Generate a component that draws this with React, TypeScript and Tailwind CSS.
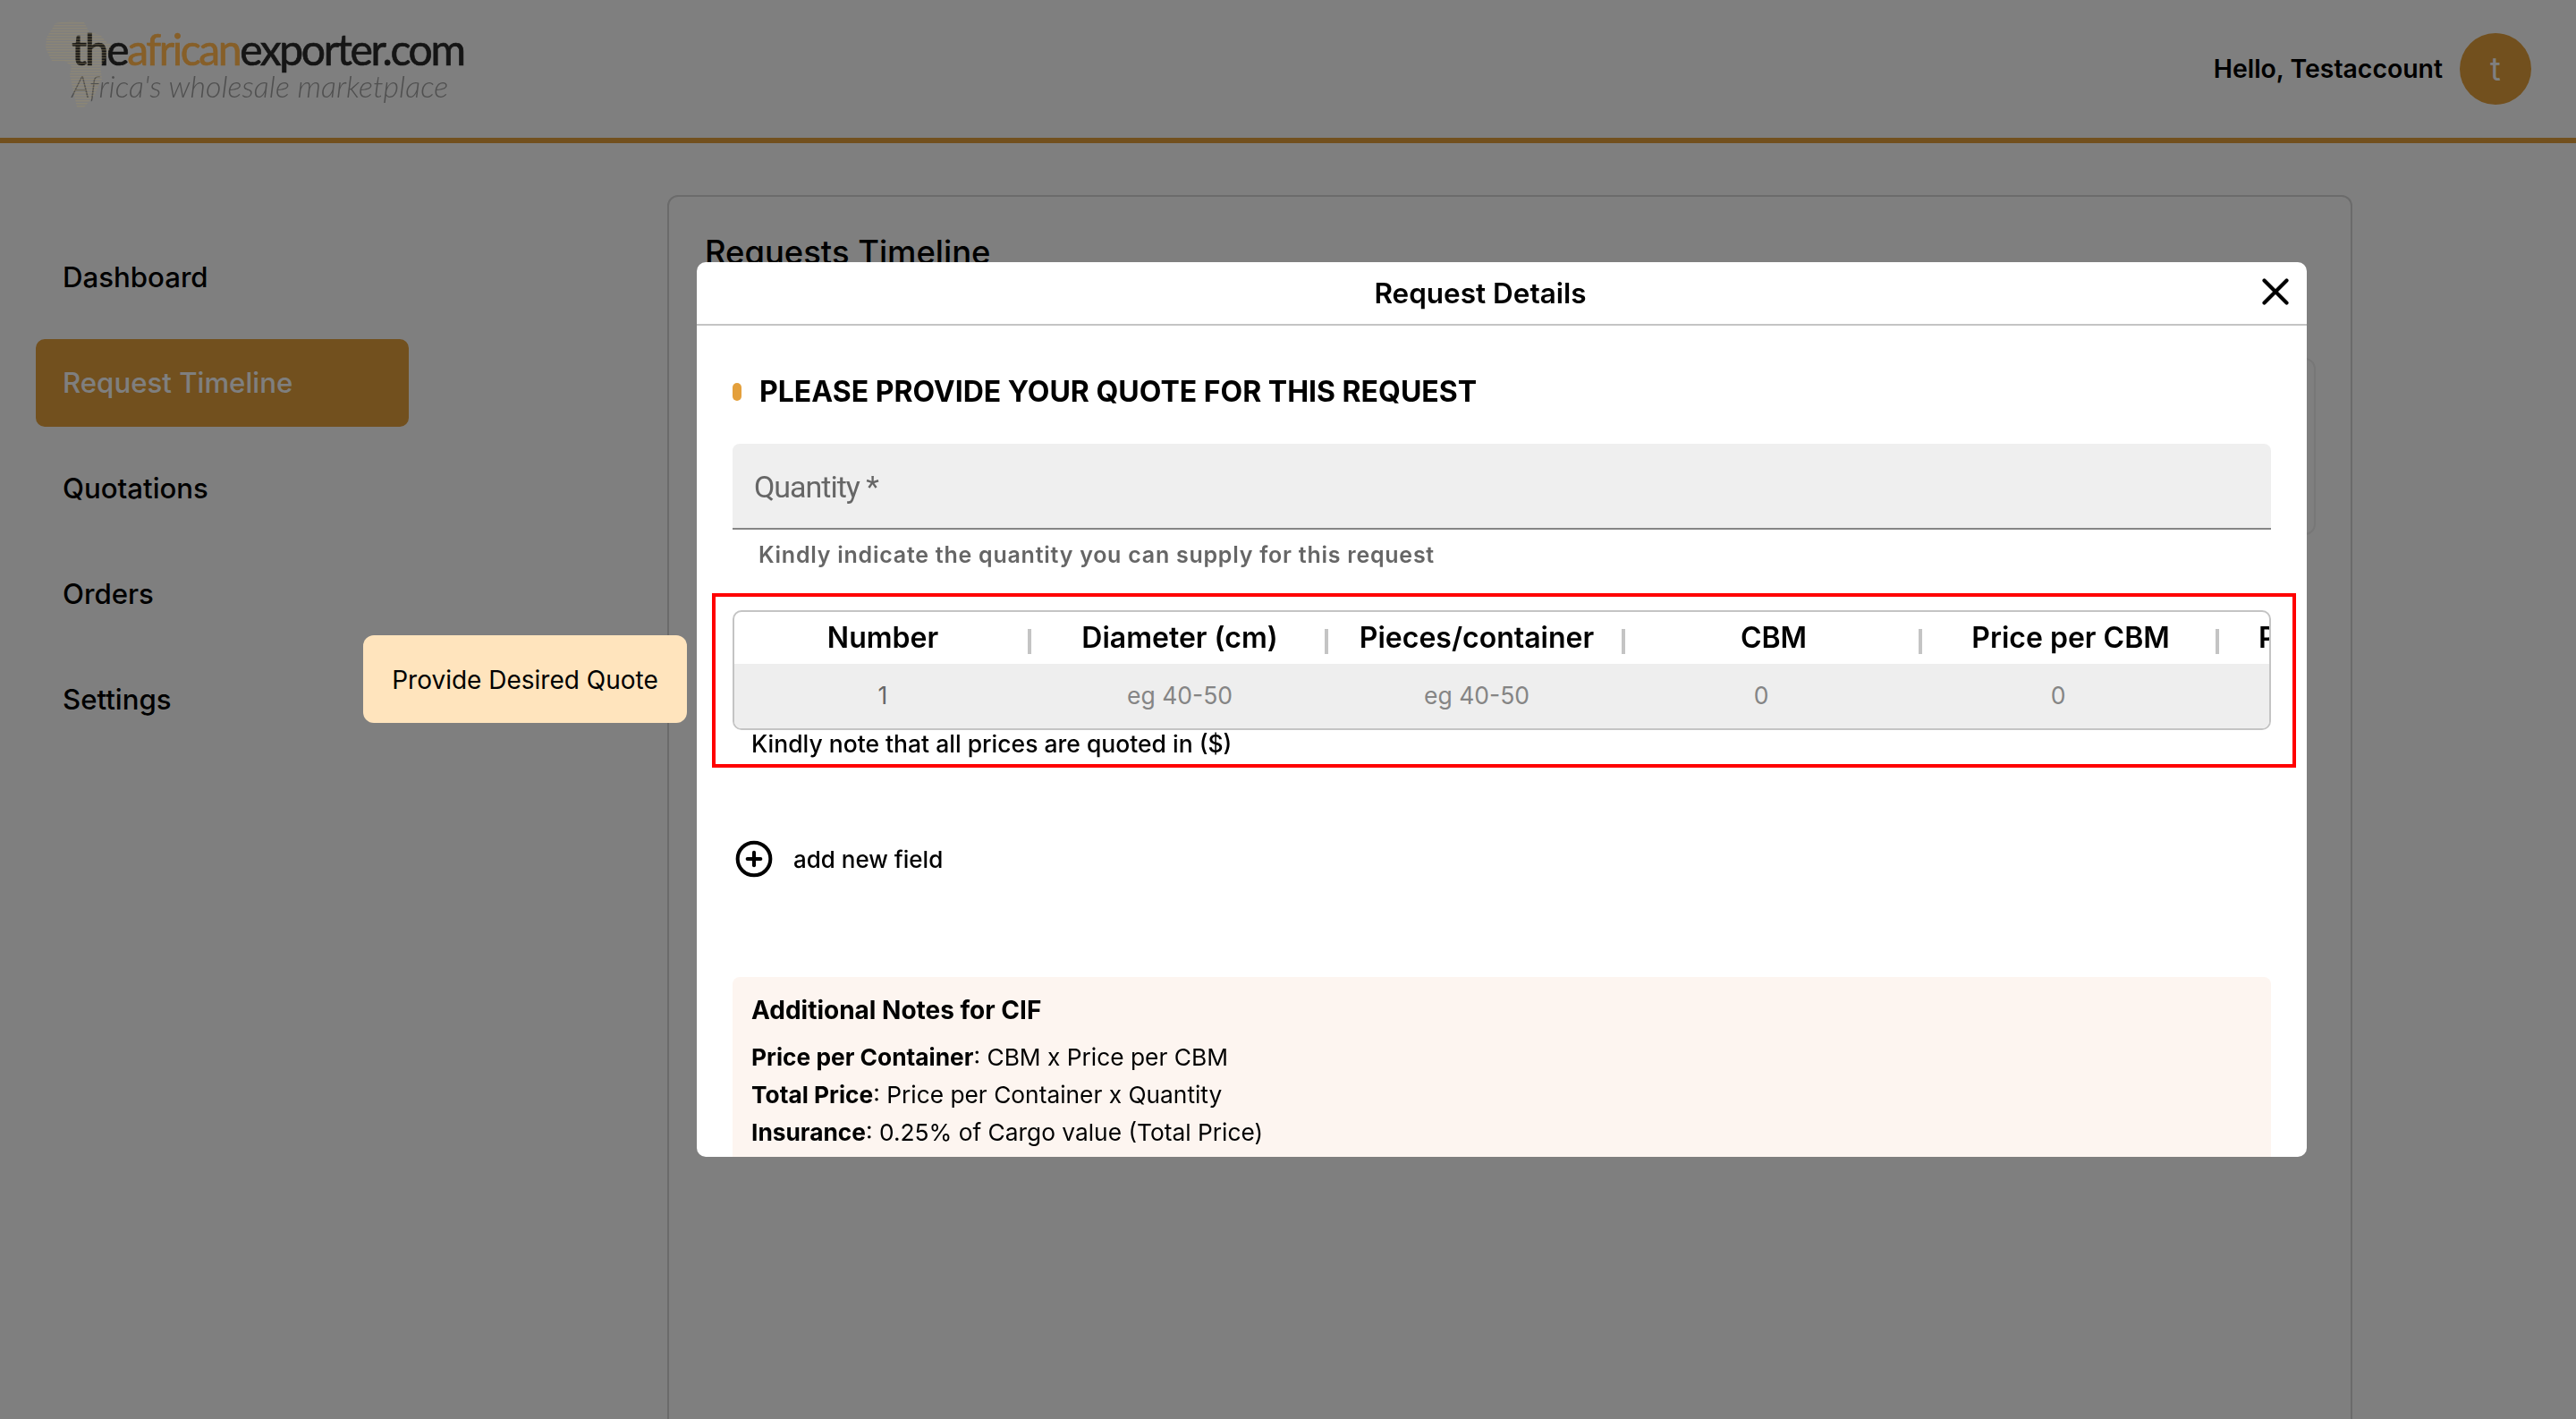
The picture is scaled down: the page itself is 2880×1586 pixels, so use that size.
import React from 'react';
import { CirclePlus, X } from 'lucide-react';

const navItems = ['Dashboard', 'Request Timeline', 'Quotations', 'Orders', 'Settings'];

const columns = [
    { title: 'Number', value: '1', valueClass: 'text-[#666666]' },
    { title: 'Diameter (cm)', value: 'eg 40-50', valueClass: 'text-[#858585]' },
    { title: 'Pieces/container', value: 'eg 40-50', valueClass: 'text-[#858585]' },
    { title: 'CBM', value: '0', valueClass: 'text-[#858585] pr-[28px]' },
    { title: 'Price per CBM', value: '0', valueClass: 'text-[#858585] pr-[28px]' },
    { title: 'Price/Container', value: '', valueClass: '' },
];

const notes = [
    { label: 'Price per Container', text: ': CBM x Price per CBM' },
    { label: 'Total Price', text: ': Price per Container x Quantity' },
    { label: 'Insurance', text: ': 0.25% of Cargo value (Total Price)' },
];

const AfricaMark = () => (
    <svg className="absolute left-[50px] top-[22px]" width="76" height="100" viewBox="0 0 76 100">
        <defs>
            <pattern id="dots" width="3" height="3" patternUnits="userSpaceOnUse">
                <rect width="3" height="1.5" fill="#a09068" />
            </pattern>
        </defs>
        <path
            d="M12 4 L30 1 L44 3 L50 14 L62 17 L70 26 L75 28 L68 44 L62 52 L64 66 L56 84 L44 98 L36 98 L32 80 L28 62 L30 52 L22 46 L8 46 L1 32 L2 20 Z"
            fill="url(#dots)"
            opacity="0.4"
        />
    </svg>
);

// the logo is an image in the original, its colours are given as they look under the dimmed backdrop
const Logo = () => (
    <div className="relative z-10 h-full w-[560px] font-['Lato',sans-serif]">
        <div className="absolute left-[80px] top-[32px] text-[48px] leading-[46px] font-normal tracking-[-0.05em] whitespace-nowrap text-[#151515] [-webkit-text-stroke:0.7px]">
            the<span className="text-[#875f28]">african</span>exporter.com
        </div>
        <div className="absolute left-[80px] top-[78px] text-[34px] leading-[36px] font-light italic text-[#505050] whitespace-nowrap">
            Africa's wholesale marketplace
        </div>
        <AfricaMark />
    </div>
);

const App = () => {
    return (
        <div className="relative h-screen overflow-hidden bg-white font-['Inter',sans-serif] text-black">
            <header className="flex h-[160px] items-center justify-between border-b-[6px] border-[#e4a03c] pr-[50px]">
                <Logo />
                <div className="flex items-center gap-[19px]">
                    <span className="text-[28.4px] font-semibold">Hello, Testaccount</span>
                    <div className="flex h-[80px] w-[80px] items-center justify-center rounded-full bg-[#e4a03c] text-[36px] text-white">
                        t
                    </div>
                </div>
            </header>

            <div className="flex">
                <nav className="ml-[40px] flex w-[417px] flex-col gap-5 pt-[101px]">
                    {navItems.map((item) => (
                        <div
                            key={item}
                            className={
                                item === 'Request Timeline'
                                    ? 'flex h-[98px] items-center rounded-[10px] bg-[#e4a03c] pl-[30px] text-[31.2px] font-medium text-white'
                                    : 'flex h-[98px] items-center pl-[30px] text-[31.2px] font-medium'
                            }
                        >
                            {item}
                        </div>
                    ))}
                </nav>
                <main className="ml-[289px] mt-[58px] h-[1500px] w-[1884px] rounded-[12px] border-2 border-[#d6d6d6] pl-10 pr-[39px] pt-[34px]">
                    <h1 className="text-[36.4px] font-medium leading-[56px]">Requests Timeline</h1>
                    <div className="mt-[90px] h-[198px] rounded-[12px] border-2 border-[#eeeeee]" />
                </main>
            </div>

            <div className="fixed inset-0 bg-black/50">
                <div className="ml-[779px] mt-[293px] h-[1000px] w-[1800px] overflow-hidden rounded-[10px] bg-white">
                    <div className="relative flex h-[71px] items-center justify-center border-b-2 border-[#c4c4c4] pr-[48px]">
                        <span className="text-[31.5px] font-semibold">Request Details</span>
                        <X className="absolute right-[10px] top-[8px] h-[50px] w-[50px]" strokeWidth={2} />
                    </div>

                    <div className="px-10">
                        <div className="mt-[52px] flex items-center gap-[20px]">
                            <span className="h-[20px] w-[10px] rounded-full bg-[#e4a03c]" />
                            <h2 className="text-[32px] font-bold leading-[44px]">
                                PLEASE PROVIDE YOUR QUOTE FOR THIS REQUEST
                            </h2>
                        </div>

                        <div className="mt-[36px] flex h-[96px] items-center rounded-t-[8px] border-b-2 border-[#858585] bg-[#efefef] pl-6 pt-[3px] font-['Roboto',sans-serif] text-[34px] tracking-[-0.03em] text-[#666666]">
                            Quantity *
                        </div>
                        <p className="mt-[12px] pl-[29px] text-[25px] font-semibold leading-[32px] tracking-[0.03em] text-[#666666]">
                            Kindly indicate the quantity you can supply for this request
                        </p>

                        <div className="relative mt-[46px]">
                            <div className="absolute -left-[23px] -right-[28px] -top-[19px] bottom-[-12px] border-4 border-[#ff0000]" />
                            <div className="overflow-hidden rounded-[10px] border-2 border-[#c4c4c4]">
                                <div className="grid w-[1992px] grid-cols-[repeat(6,332px)]">
                                    {columns.map((col) => (
                                        <div key={col.title} className="relative flex h-[58px] items-center justify-center text-[32px] font-semibold whitespace-nowrap">
                                            {col.title}
                                            <span className="absolute right-0 top-[19px] h-[28px] w-[4px] bg-[#c4c4c4]" />
                                        </div>
                                    ))}
                                    {columns.map((col) => (
                                        <div key={col.title} className={'flex h-[72px] items-center justify-center bg-[#eeeeee] text-[26.5px] ' + col.valueClass}>
                                            {col.value}
                                        </div>
                                    ))}
                                </div>
                            </div>
                            <p className="pl-[21px] text-[26.5px] font-medium leading-[30px]">
                                Kindly note that all prices are quoted in ($)
                            </p>
                        </div>

                        <div className="mt-[92px] flex items-center gap-[22px] pl-[2px]">
                            <CirclePlus className="h-[44px] w-[44px]" strokeWidth={2.2} />
                            <span className="text-[26px] font-medium">add new field</span>
                        </div>

                        <div className="mt-[110px] rounded-[8px] bg-[#fdf5f0] px-[21px] pt-[18px] pb-10">
                            <h3 className="text-[28px] font-bold leading-[38px]">Additional Notes for CIF</h3>
                            <div className="mt-[13px]">
                                {notes.map((note) => (
                                    <p key={note.label} className="text-[26.3px] leading-[42px]">
                                        <strong className="font-bold">{note.label}</strong>
                                        {note.text}
                                    </p>
                                ))}
                            </div>
                        </div>
                    </div>
                </div>

                <div className="absolute left-[406px] top-[710px] flex h-[98px] w-[362px] items-center justify-center rounded-[12px] bg-[#ffe4bd] pt-px text-[28px] whitespace-nowrap">
                    Provide Desired Quote
                </div>
            </div>
        </div>
    );
};

export default App;
